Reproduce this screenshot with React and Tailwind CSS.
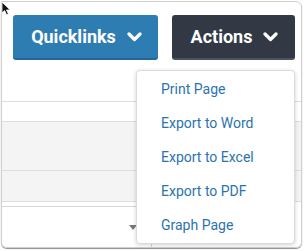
const menuItems = ['Print Page', 'Export to Word', 'Export to Excel', 'Export to PDF', 'Graph Page']

function Cursor() {
  return (
    <svg className="absolute left-[1px] top-[1px]" width="11" height="15" viewBox="0 0 11 15">
      <path d="M1 1 L1 12 L3.6 9.6 L5.6 13.8 L7.4 13 L5.5 9 L9.2 9 Z" fill="#111" stroke="#fff" strokeWidth="0.8" />
    </svg>
  )
}

function Chevron() {
  return (
    <svg width="15" height="10" viewBox="0 0 15 10" fill="none">
      <path d="M2 2 L7.5 7.5 L13 2" stroke="#fff" strokeWidth="3.2" strokeLinecap="round" strokeLinejoin="round" />
    </svg>
  )
}

export default function App() {
  return (
    <div className="relative h-[251px] w-[304px] overflow-hidden bg-white font-['Roboto',sans-serif]">
      <div className="ml-[1px] mt-[1px] flex h-[247px] w-[301px] flex-col overflow-hidden rounded-b-[6px] rounded-tr-[6px] border border-[#cfcfcf] shadow-[0_1px_1px_rgba(0,0,0,0.45)]">
        <div className="flex h-[59px] gap-[14px] pl-[11px] pt-[13px]">
          <button className="flex h-[45px] w-[145px] items-center justify-center gap-[11px] rounded-[3px] border-b-2 border-[#23689b] bg-[#2d7db2] pl-[2px] text-[18px] font-bold text-white">
            Quicklinks
            <Chevron />
          </button>
          <button className="flex h-[45px] w-[123px] items-center justify-center gap-[11px] rounded-[3px] border-b-2 border-[#4a5263] bg-[#323945] pl-[2px] text-[18px] font-bold text-white">
            Actions
            <Chevron />
          </button>
        </div>
        <div className="h-[40px]" />
        <div className="h-[21px] border-y border-[#dddddd]" />
        <div className="h-[49px] border-b border-[#dddddd] bg-[#f4f4f4]" />
        <div className="h-[31px] border-b border-[#dddddd] bg-[#f4f4f4]" />
        <div className="h-[4px]" />
        <div className="flex w-[150px] flex-1 items-center justify-end border-r border-t border-[#d6d6d6] pr-[14px]">
          <div className="mt-[1px] h-0 w-0 border-x-[4px] border-t-[5px] border-x-transparent border-t-[#777]" />
        </div>
      </div>
      <div className="absolute left-[136px] top-[70px] w-[159px] rounded-[4px] border border-[#dcdcdc] bg-white py-[1px] shadow-[0_1px_4px_rgba(0,0,0,0.18)]">
        {menuItems.map((item) => (
          <div key={item} className="flex h-[34px] items-center pl-[24px] text-[14px] text-[#2b73b0]">
            {item}
          </div>
        ))}
      </div>
      <Cursor />
    </div>
  )
}
